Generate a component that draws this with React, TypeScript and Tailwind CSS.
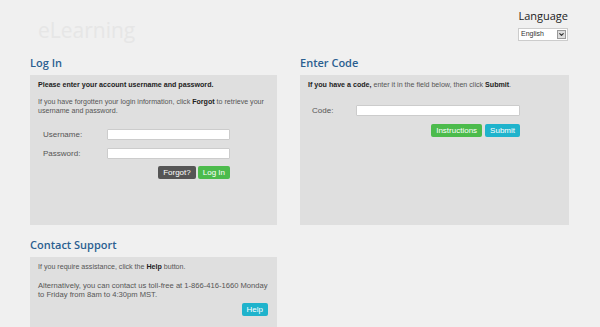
import { ChevronDown } from 'lucide-react'

const font = { fontFamily: '"Open Sans", "Liberation Sans", sans-serif' }

function Btn({ label, color }: { label: string; color: string }) {
  return (
    <button className={`h-[13px] px-[5px] rounded-[2px] text-white text-[8px] leading-[13px] ${color}`}>
      {label}
    </button>
  )
}

export default function App() {
  return (
    <div
      className="w-[600px] h-[327px] overflow-hidden bg-[#f0f0f0] text-[#333]"
      style={{ fontFamily: '"Liberation Sans", Arial, sans-serif' }}
    >
      {/* Header */}
      <div className="flex justify-between h-[55px]">
        <div className="pl-[38px] pt-[15px] text-[21px] text-[#e6e6e6]" style={font}>
          eLearning
        </div>
        <div className="flex flex-col items-end pr-[32px] pt-[8px]">
          <div className="text-[11px] text-[#222]" style={font}>
            Language
          </div>
          <div className="mt-[3px] flex items-center w-[50px] h-[13px] bg-white border border-[#ccc] text-[7px] pl-[2px] justify-between">
            <span>English</span>
            <span className="w-[9px] h-[9px] bg-[#ddd] border border-[#999] flex items-center justify-center mr-[1px]">
              <ChevronDown className="w-[7px] h-[7px]" strokeWidth={4} />
            </span>
          </div>
        </div>
      </div>

      {/* Columns */}
      <div className="flex gap-[23px] pl-[30px]">
        <div className="w-[247px]">
          <h2 className="text-[11px] font-semibold text-[#2b5f90] h-[20px] leading-[16px]" style={font}>
            Log In
          </h2>
          <div className="bg-[#dfdfdf] h-[150px] px-[8px] pt-[6px] text-[7.1px] leading-[9px]">
            <p className="font-bold text-[#222]">Please enter your account username and password.</p>
            <p className="mt-[8px] text-[#555]">
              If you have forgotten your login information, click <b className="text-[#222]">Forgot</b> to retrieve
              your username and password.
            </p>
            <div className="mt-[13px] pl-[5px] flex flex-col gap-[8px] text-[8px] text-[#555]">
              <div className="flex items-center">
                <span className="w-[64px]">Username:</span>
                <div className="w-[123px] h-[11px] bg-white border border-[#ccc] rounded-[1px]" />
              </div>
              <div className="flex items-center">
                <span className="w-[64px]">Password:</span>
                <div className="w-[123px] h-[11px] bg-white border border-[#ccc] rounded-[1px]" />
              </div>
            </div>
            <div className="flex justify-end gap-[2px] w-[192px] mt-[7px]">
              <Btn label="Forgot?" color="bg-[#555]" />
              <Btn label="Log In" color="bg-[#4cbb4c]" />
            </div>
          </div>
        </div>

        <div className="w-[269px]">
          <h2 className="text-[11px] font-semibold text-[#2b5f90] h-[20px] leading-[16px]" style={font}>
            Enter Code
          </h2>
          <div className="bg-[#dfdfdf] h-[150px] px-[8px] pt-[6px] text-[7.1px] leading-[9px] text-[#555]">
            <p>
              <b className="text-[#222]">If you have a code,</b> enter it in the field below, then click{' '}
              <b className="text-[#222]">Submit</b>.
            </p>
            <div className="mt-[15px] pl-[4px] flex items-center text-[8px] text-[#555]">
              <span className="w-[44px]">Code:</span>
              <div className="w-[164px] h-[11px] bg-white border border-[#ccc] rounded-[1px]" />
            </div>
            <div className="flex justify-end gap-[3px] w-[212px] mt-[8px]">
              <Btn label="Instructions" color="bg-[#4cbb4c]" />
              <Btn label="Submit" color="bg-[#1fb3cc]" />
            </div>
          </div>
        </div>
      </div>

      {/* Contact support */}
      <div className="pl-[30px] mt-[12px] w-[277px]">
        <h2 className="text-[11px] font-semibold text-[#2b5f90] h-[20px] leading-[16px]" style={font}>
          Contact Support
        </h2>
        <div className="bg-[#dfdfdf] h-[80px] pl-[8px] pr-[9px] pt-[6px] text-[7.1px] leading-[9px] text-[#555]">
          <p>
            If you require assistance, click the <b className="text-[#222]">Help</b> button.
          </p>
          <p className="mt-[9px] text-[7.6px]">
            Alternatively, you can contact us toll-free at 1-866-416-1660 Monday to Friday from 8am to 4:30pm MST.
          </p>
          <div className="flex justify-end mt-[4px]">
            <Btn label="Help" color="bg-[#1fb3cc]" />
          </div>
        </div>
      </div>
    </div>
  )
}
